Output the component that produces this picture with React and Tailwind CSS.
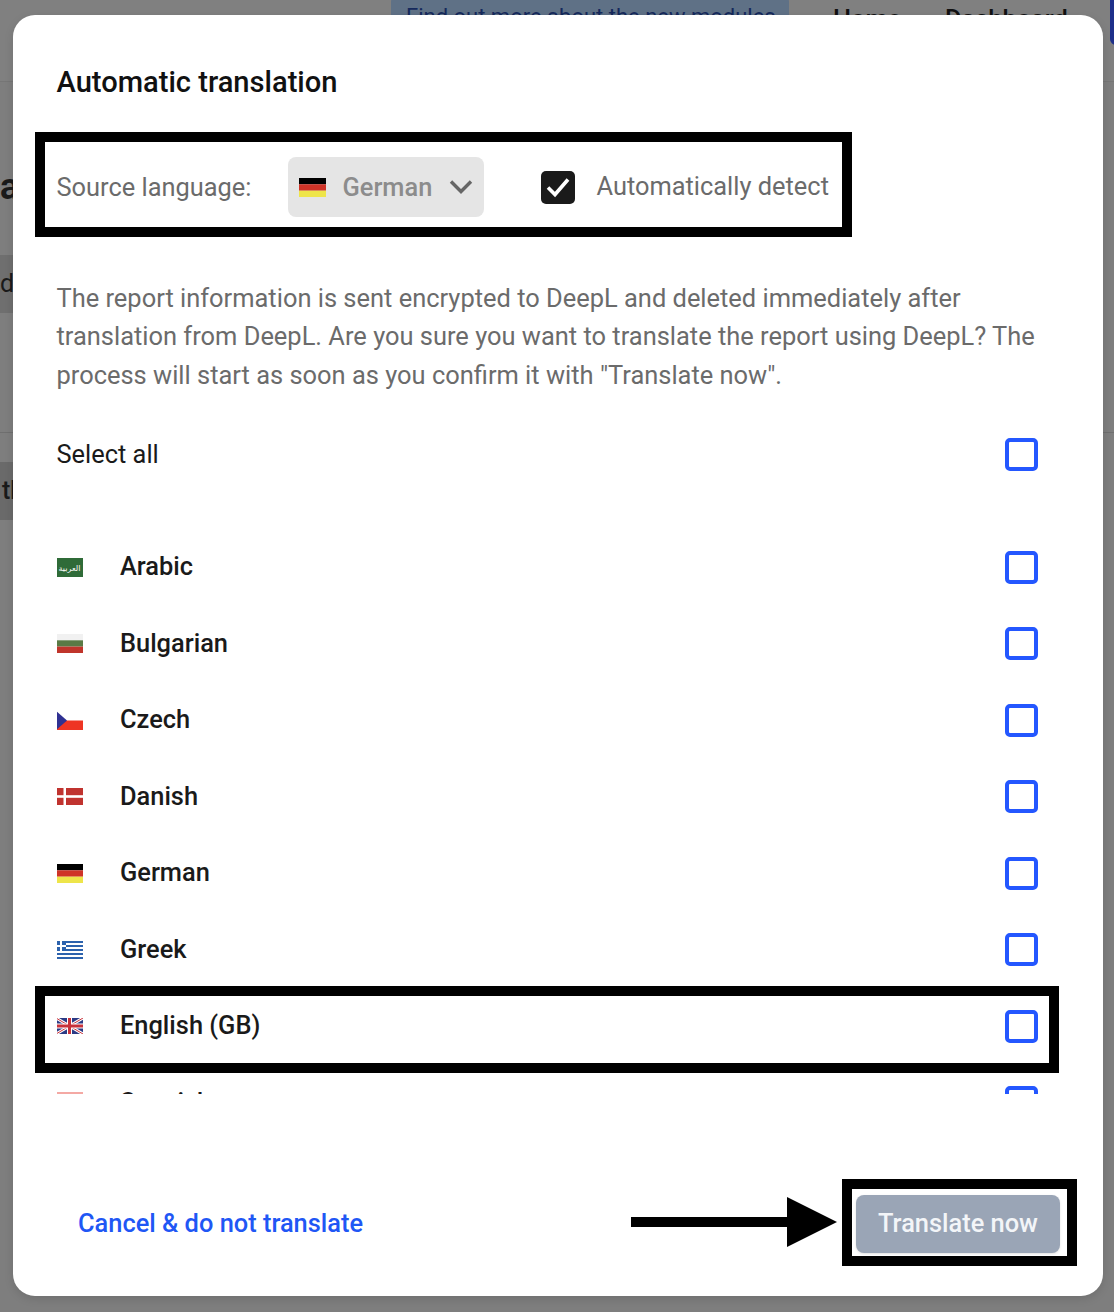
const LANGUAGES = [
  { name: 'Arabic', flag: 'ar' },
  { name: 'Bulgarian', flag: 'bg' },
  { name: 'Czech', flag: 'cz' },
  { name: 'Danish', flag: 'da' },
  { name: 'German', flag: 'de' },
  { name: 'Greek', flag: 'el' },
  { name: 'English (GB)', flag: 'gb' },
  { name: 'Spanish', flag: 'es' },
];

function Flag({ code }) {
  if (code === 'ar') {
    return (
      <svg width="27" height="19" viewBox="0 0 27 19" className="block">
        <rect width="27" height="19" fill="#2f6b38" />
        <text x="13.5" y="12.5" textAnchor="middle" fontSize="8" fill="#ffffff" fontFamily="'DejaVu Sans', sans-serif">العربية</text>
      </svg>
    );
  }
  if (code === 'bg') {
    return (
      <svg width="27" height="19" viewBox="0 0 27 19" className="block">
        <rect width="27" height="6.3" fill="#f1f1f1" />
        <rect y="6.3" width="27" height="6.3" fill="#5a7a45" />
        <rect y="12.6" width="27" height="6.4" fill="#c0352b" />
      </svg>
    );
  }
  if (code === 'cz') {
    return (
      <svg width="27" height="19" viewBox="0 0 27 19" className="block">
        <rect y="9.5" width="27" height="9.5" fill="#ee3524" />
        <polygon points="0,0 11,9.5 0,19" fill="#2f3192" />
      </svg>
    );
  }
  if (code === 'da') {
    return (
      <svg width="27" height="17" viewBox="0 0 27 17" className="block">
        <rect width="27" height="17" fill="#c0332f" />
        <rect x="7.5" width="2.5" height="17" fill="#fff" />
        <rect y="7.2" width="27" height="2.6" fill="#fff" />
      </svg>
    );
  }
  if (code === 'de') {
    return (
      <svg width="27" height="19" viewBox="0 0 27 19" className="block">
        <rect width="27" height="6.3" fill="#000" />
        <rect y="6.3" width="27" height="6.4" fill="#cf3327" />
        <rect y="12.7" width="27" height="6.3" fill="#eee54a" />
      </svg>
    );
  }
  if (code === 'el') {
    return (
      <svg width="27" height="18" viewBox="0 0 27 18" className="block">
        <rect width="27" height="18" fill="#fff" />
        {[0, 4, 8, 12, 16].map(y => (
          <rect key={y} y={y} width="27" height="2" fill="#2c62ad" />
        ))}
        <rect width="10" height="10" fill="#2c62ad" />
        <rect x="4" width="2" height="10" fill="#fff" />
        <rect y="4" width="10" height="2" fill="#fff" />
      </svg>
    );
  }
  if (code === 'gb') {
    return (
      <svg width="27" height="16" viewBox="0 0 27 16" className="block">
        <rect width="27" height="16" fill="#2b3a85" />
        <path d="M0 0 27 16M27 0 0 16" stroke="#fff" strokeWidth="3" />
        <path d="M0 0 27 16M27 0 0 16" stroke="#c8313a" strokeWidth="1" />
        <path d="M13.5 0V16M0 8H27" stroke="#fff" strokeWidth="5" />
        <path d="M13.5 0V16M0 8H27" stroke="#c8313a" strokeWidth="3" />
      </svg>
    );
  }
  return (
    <svg width="27" height="21" viewBox="0 0 27 21" className="block">
      <rect width="27" height="6" fill="#f4a9a4" />
      <rect y="6" width="27" height="9" fill="#f5d76e" />
      <rect y="15" width="27" height="6" fill="#f4a9a4" />
    </svg>
  );
}

function BlueCheckbox() {
  return <div className="w-[33px] h-[33px] rounded-[5px] border-4 border-[#2457ff] bg-white shrink-0" />;
}

function LanguageRow({ lang }) {
  return (
    <div className="flex items-center h-[76.5px] pr-[21px]">
      <div className="w-[27px] -ml-[1px] flex justify-center shrink-0">
        <Flag code={lang.flag} />
      </div>
      <span className="ml-[37.5px] pb-[2px] text-[25.4px] font-medium text-[#1a1a1a] flex-1">{lang.name}</span>
      <BlueCheckbox />
    </div>
  );
}

export default function App() {
  return (
    <div className="relative w-[1114px] h-[1312px] overflow-hidden bg-[#7e7e7e] font-['Roboto',sans-serif]">
      {/* page behind the dialog */}
      <div className="absolute inset-x-0 top-0 h-[82px] bg-[#808080] border-b border-[#767676]">
        <div className="absolute left-[391px] top-[-6px] w-[398px] h-[40px] rounded-[8px] bg-[#5f7186] pl-[15px] pt-[6px] text-[22px] text-[#15295c] whitespace-nowrap overflow-hidden">
          Find out more about the new modules
        </div>
        <span className="absolute left-[833px] top-[0px] text-[25.4px] font-medium text-[#111]">Home</span>
        <span className="absolute left-[945px] top-[0px] text-[25.4px] font-medium text-[#111]">Dashboard</span>
        <div className="absolute left-[1110px] top-[-10px] w-[20px] h-[55px] rounded-[6px] bg-[#1d2f8a]" />
      </div>
      <div className="absolute left-0 top-[165px] text-[36px] font-bold text-[#1a1a1a] leading-[44px]">a</div>
      <div className="absolute left-0 top-[255px] w-[13px] h-[58px] bg-[#6f6f6f] text-[25px] text-[#1a1a1a] leading-[58px] overflow-hidden">d</div>
      <div className="absolute inset-x-0 top-[432px] h-px bg-[#6f6f6f]" />
      <div className="absolute left-0 top-[462px] w-[13px] h-[58px] bg-[#6a6a6a] text-[25px] font-medium text-[#1a1a1a] leading-[58px] overflow-hidden whitespace-nowrap pl-[2px]">th</div>

      {/* dialog */}
      <div className="relative ml-[13px] mt-[15px] w-[1090px] h-[1281px] rounded-[22px] bg-white pl-[43.5px] pr-[44px] pt-[46px] shadow-[0_3px_10px_rgba(0,0,0,0.12)]">
        <h2 className="h-[42px] text-[29.1px] leading-[42px] font-medium text-[#111]">Automatic translation</h2>

        <div className="relative mt-[54px] flex items-center h-[60px] w-[773px]">
          <span className="text-[25.4px] text-[#6b6b6b] w-[231.5px] shrink-0">Source language:</span>
          <div className="flex items-center w-[196px] h-[60px] rounded-[8px] bg-[#e5e5e5] pl-[11px] shrink-0">
            <Flag code="de" />
            <span className="ml-[16.5px] text-[25.4px] font-medium text-[#8c8c8c]">German</span>
            <svg width="24" height="15" viewBox="0 0 24 15" className="ml-[17px] -mt-[2px]">
              <path d="M2 2.5 12 12.5 22 2.5" fill="none" stroke="#666" strokeWidth="3.4" />
            </svg>
          </div>
          <div className="ml-[57px] flex items-center justify-center w-[34px] h-[33px] rounded-[5px] bg-[#1a1a1a] shrink-0">
            <svg width="26" height="22" viewBox="0 0 26 22">
              <path d="M3 11.5 10 18.5 23 3.5" fill="none" stroke="#fff" strokeWidth="3.6" />
            </svg>
          </div>
          <span className="ml-[21.5px] pb-[2px] text-[25.4px] text-[#6b6b6b] whitespace-nowrap">Automatically detect</span>
          <div className="absolute left-[-21.5px] top-[-25px] w-[817px] h-[105px] border-[10px] border-black" />
        </div>

        <p className="mt-[62px] text-[25.45px] leading-[38.4px] text-[#6b6b6b]">
          The report information is sent encrypted to DeepL and deleted immediately after
          translation from DeepL. Are you sure you want to translate the report using DeepL? The
          process will start as soon as you confirm it with "Translate now".
        </p>

        <div className="mt-[22px] flex items-center h-[77px] pr-[21px]">
          <span className="flex-1 pb-[2px] text-[25.4px] text-[#1a1a1a]">Select all</span>
          <BlueCheckbox />
        </div>

        <div className="relative mt-[36px]">
          <div className="h-[564.5px] overflow-hidden">
            {LANGUAGES.map(lang => <LanguageRow key={lang.name} lang={lang} />)}
          </div>
          <div className="absolute left-[-21.5px] top-[457px] w-[1024px] h-[87px] border-[10px] border-black" />
        </div>

        <div className="relative mt-[101.5px] flex items-center justify-between h-[58px] -mr-px">
          <span className="ml-[21.5px] pb-[2px] text-[25.4px] font-medium text-[#1f57f5]">Cancel &amp; do not translate</span>
          <button className="w-[204px] h-[58px] pb-[2px] rounded-[8px] bg-[#9aa5b6] text-[25.4px] font-medium text-[#f3f5f8] shadow-sm">
            Translate now
          </button>
          <div className="absolute left-[785.5px] top-[-16px] w-[235px] h-[87px] border-[10px] border-black" />
          <svg width="206" height="50" viewBox="0 0 206 50" className="absolute left-[574.5px] top-[2px]">
            <rect x="0" y="20" width="160" height="10" fill="#000" />
            <polygon points="156,0 206,25 156,50" fill="#000" />
          </svg>
        </div>
      </div>
    </div>
  );
}
